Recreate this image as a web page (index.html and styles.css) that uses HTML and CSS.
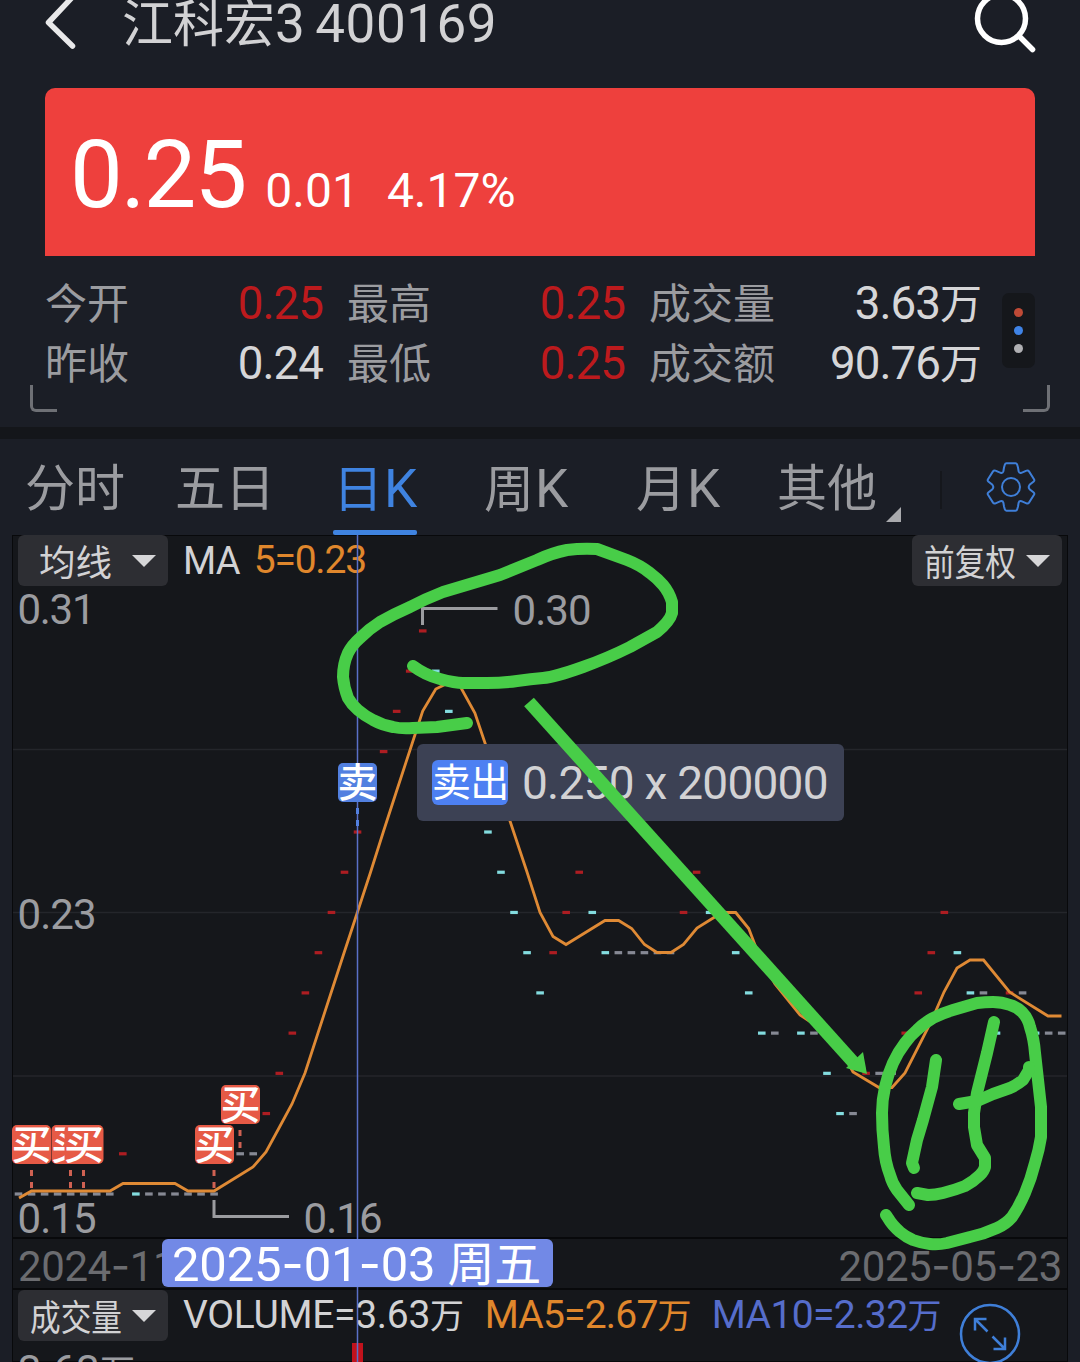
FILE: index.html
```html
<!DOCTYPE html>
<html lang="zh-CN">
<head>
  <meta charset="UTF-8" />
  <meta name="viewport" content="width=device-width, initial-scale=1.0"/>
  <title>江科宏3 400169</title>
  <link rel="stylesheet" href="styles.css">
</head>
<body>
  <header class="header">
    <svg class="back" width="40" height="60" viewBox="0 0 40 60">
      <path d="M34.5 -3L10.5 22.5L34.5 46"/>
    </svg>
    <h1>江科宏<span class="num">3</span><span class="num code">400169</span></h1>
    <svg class="search" width="70" height="60" viewBox="0 0 70 60">
      <circle cx="31.5" cy="18.5" r="24"/>
      <path d="M49 36L62.5 49.5"/>
    </svg>
  </header>

  <section class="quote">
    <div class="price">
      <span class="last">0.25</span>
      <span class="change">0.01</span>
      <span class="percent">4.17%</span>
    </div>
    <div class="stats">
      <div class="stat"><span>今开</span><b class="num up">0.25</b></div>
      <div class="stat"><span>最高</span><b class="num up">0.25</b></div>
      <div class="stat"><span>成交量</span><b><i class="num">3.63</i>万</b></div>
      <div class="stat"><span>昨收</span><b class="num">0.24</b></div>
      <div class="stat"><span>最低</span><b class="num up">0.25</b></div>
      <div class="stat"><span>成交额</span><b><i class="num">90.76</i>万</b></div>
    </div>
    <div class="dots"><i class="red"></i><i class="blue"></i><i></i></div>
    <div class="corner left"></div>
    <div class="corner right"></div>
  </section>

  <nav class="tabs">
    <a class="tab">分时</a>
    <a class="tab">五日</a>
    <a class="tab active">日<span class="num">K</span></a>
    <a class="tab">周<span class="num">K</span></a>
    <a class="tab">月<span class="num">K</span></a>
    <a class="tab more">其他</a>
    <span class="line"></span>
    <svg class="gear" width="50" height="50" viewBox="-25 -25 50 50">
      <path d="M-7 -19.5L-6.2 -22.3Q-5.8 -23.7 -4.5 -23.7H4.5Q5.8 -23.7 6.2 -22.3L7 -19.5L7.6 -15.8Q8.2 -13.6 10.4 -14.2L15.5 -16.3Q17 -17 18 -15.6L23 -7.8Q23.8 -6.4 22.7 -5.4L18.6 -2.2Q16.8 0 18.6 2.2L22.7 5.4Q23.8 6.4 23 7.8L18 15.6Q17 17 15.5 16.3L10.4 14.2Q8.2 13.6 7.6 15.8L7 19.5L6.2 22.3Q5.8 23.7 4.5 23.7H-4.5Q-5.8 23.7 -6.2 22.3L-7 19.5L-7.6 15.8Q-8.2 13.6 -10.4 14.2L-15.5 16.3Q-17 17 -18 15.6L-23 7.8Q-23.8 6.4 -22.7 5.4L-18.6 2.2Q-16.8 0 -18.6 -2.2L-22.7 -5.4Q-23.8 -6.4 -23 -7.8L-18 -15.6Q-17 -17 -15.5 -16.3L-10.4 -14.2Q-8.2 -13.6 -7.6 -15.8Z"/>
      <circle r="9"/>
    </svg>
  </nav>

  <main class="chart">
    <div class="row ma-row">
      <button class="pill">均线</button>
      <span class="ma">MA</span>
      <span class="ma5">5=0.23</span>
      <button class="pill narrow fq"><span>前复权</span></button>
    </div>
    <div class="plot"></div>
    <div class="row dates">
      <span>2024<i>-</i>11<i>-</i>25</span>
      <span>2025<i>-</i>05<i>-</i>23</span>
    </div>
    <div class="row vol-row">
      <button class="pill narrow"><span>成交量</span></button>
      <span class="vol">VOLUME=3.63<small>万</small></span>
      <span class="vol5">MA5=2.67<small>万</small></span>
      <span class="vol10">MA10=2.32<small>万</small></span>
    </div>
    <div class="vol-max">3.63<small>万</small></div>

    <!-- viewBox uses page coordinates, the chart starts at y=535 -->
    <svg class="layer" width="1080" height="827" viewBox="0 535 1080 827">
      <path class="grid" d="M13 749.5H1067M13 912.5H1067M13 1076H1067"/>
      <rect x="352" y="1343" width="11" height="19" fill="#c1121c"/>
      <g id="candles"></g>
      <polyline class="avg" points="19,1198 31.5,1191 110,1191 123,1183.5 175,1183.5 188,1191 214,1191 240,1175 253,1167 266,1152 279,1128 292,1104 305,1073 318,1033 331,993 344,953 357.5,912 370.6,872 383.6,831 396.6,791 409.7,751 422.7,711 435.8,689 446,684 460,686 474.9,713 485,743 501,790 510,821 527,872 540,912.5 553,936.5 566,944.5 605,920.5 618.6,920.5 631.7,928.5 644.5,944.5 657,952.5 671,952.5 683.5,944.5 697,928 722,912.5 735.7,912.5 748.7,928.5 760,958 775,984 800,1015 813.8,1024 840,1048 853,1072 879,1087.5 892,1087.5 905,1073 931,1022 944,992 957,968 970,960 983.5,960 1009.5,992 1048,1016 1061.5,1016"/>
      <path class="hint" d="M422.5 625V608.5H497.5M214 1200V1216.5H289"/>
      <g class="axis">
        <text x="17.5" y="624" textLength="78">0.31</text>
        <text x="17.5" y="929" textLength="79">0.23</text>
        <text x="17.5" y="1233" textLength="79">0.15</text>
        <text x="303.5" y="1233" textLength="79">0.16</text>
        <text x="512.5" y="625" textLength="79">0.30</text>
      </g>
      <path class="cross" d="M357.5 535V1362"/>
      <path class="stem sell" d="M357.5 808V814M357.5 820V826"/>
      <path class="stem" d="M31.5 1170V1176M31.5 1182V1188M70.5 1170V1176M70.5 1182V1188M83.5 1170V1176M83.5 1182V1188M214 1170V1176M214 1182V1188M240 1130V1136M240 1142V1148"/>
      <g class="trade">
        <rect x="12" y="1125" width="39" height="39" rx="5"/><text x="31.5" y="1158.5">买</text>
        <rect x="51.5" y="1125" width="39" height="39" rx="5"/><text x="71" y="1158.5">买</text>
        <rect x="64.5" y="1125" width="39" height="39" rx="5"/><text x="84" y="1158.5">买</text>
        <rect x="195" y="1125" width="39" height="39" rx="5"/><text x="214.5" y="1158.5">买</text>
        <rect x="221" y="1085" width="39" height="39" rx="5"/><text x="240.5" y="1118.5">买</text>
        <rect class="sell" x="338" y="763" width="39" height="39" rx="5"/><text x="357.5" y="797">卖</text>
      </g>
    </svg>

    <div class="date-tag">2025<i>-</i>01<i>-</i>03 <small>周五</small></div>
    <div class="tooltip"><b>卖出</b><span>0.250 x 200000</span></div>

    <svg class="expand" width="62" height="62" viewBox="-31 -31 62 62">
      <circle r="29"/>
      <path d="M-2.5 -2.5L-15 -15M-15 -3.5V-15H-3.5M2.5 2.5L15 15M15 3.5V15H3.5"/>
    </svg>

    <!-- hand drawn notes -->
    <svg class="layer notes" width="1080" height="827" viewBox="0 535 1080 827">
      <path d="M413 666Q425 675 440 679T463 683T487 683T517 681T543 678T583 667Q608 658 630 647L657 632Q670 621 672 613V602Q669 592 663 585Q658 579 650 573Q640 565 627 560L597 549Q582 548 567 550Q552 553 537 560L500 575L443 592Q425 599 410 607Q394 614 380 622Q369 629 360 638Q352 645 348 653Q343 664 343 677Q344 688 348 698Q352 705 358 710Q365 716 373 720Q382 725 393 727Q402 729 413 728L437 727L467 723"/>
      <path d="M909 1205L897 1190Q892 1183 890 1175Q885 1162 884 1147Q882 1130 882 1113Q882 1100 885 1087Q888 1074 893 1063Q898 1052 905 1043Q911 1035 917 1030Q924 1023 933 1018Q943 1013 953 1010L977 1003Q985 1002 993 1002Q1002 1002 1010 1005Q1017 1007 1022 1012Q1028 1018 1030 1027Q1034 1039 1035 1053L1038 1080L1041 1107V1137Q1039 1150 1035 1163Q1031 1179 1025 1193Q1019 1207 1012 1217Q1006 1224 997 1228Q984 1234 970 1237L947 1243Q938 1245 930 1244Q921 1243 913 1240Q906 1237 900 1232Q892 1225 888 1218L886 1215"/>
      <path d="M936 1060L932 1087L923 1120L917 1140L912 1163L914 1168"/>
      <path d="M994 1022L987 1053L977 1093L974 1113V1127L977 1145L985 1158V1167Q984 1171 980 1175Q974 1181 965 1186Q955 1190 943 1193Q935 1195 928 1195L917 1193"/>
      <path d="M959 1104L977 1101L993 1094L1010 1088Q1017 1085 1023 1080L1029 1070V1067"/>
      <path class="arrow" d="M529 702L854 1063"/>
      <polygon points="867,1074 846,1068 863,1052"/>
    </svg>
  </main>

  <script>
    // colour + close in cents for every trading day, "-" = nothing to draw
    const days = 'g16 g16 g16 g16 g16 g16 g16 g16 r17 c16 g16 g16 g16 g16 g16 g16 r17 g17 g17 r18 r19 r20 r21 r22 r23 r24 r25 r26 r27 r28 r29 r30 c29 c28 c27 c26 c25 c24 c23 c22 c21 r22 r23 r24 c23 c22 g22 g22 g22 g22 g22 r23 r24 c23 g23 c22 c21 c20 g20 - c20 g20 c19 c18 g18 r19 g19 g19 r20 r21 r22 r23 c22 c21 g21 c20 r21 g21 c20 g20 g20'.split(' ');
    const colors = { g: '#868994', r: '#ad1d22', c: '#83dcdf' };
    const candles = document.getElementById('candles');

    days.forEach((day, i) => {
      if (day === '-') return;
      const bar = document.createElementNS('http://www.w3.org/2000/svg', 'rect');
      bar.setAttribute('x', 18.5 + i * 13.04 - 3.8);
      bar.setAttribute('y', 1194 - (day.slice(1) - 16) * 40.22 - 1.6);
      bar.setAttribute('width', 7.6);
      bar.setAttribute('height', 3.2);
      bar.setAttribute('fill', colors[day[0]]);
      candles.appendChild(bar);
    });
  </script>
</body>
</html>
```
FILE: styles.css
```css
* {
  box-sizing: border-box;
}

body {
  margin: 0;
  width: 1080px;
  height: 1362px;
  overflow: hidden;
  background: #1b1e26;
  color: #d2d2d4;
  font-family: Roboto, "Noto Sans CJK SC", sans-serif;
}

i, b, small {
  font-style: normal;
  font-weight: normal;
}

.num {
  font-size: 1.09em;
}

/* header */
.header {
  height: 88px;
  display: flex;
  align-items: flex-start;
  padding: 0 40px 0 38px;
}

.header svg {
  fill: none;
  stroke: #fff;
  stroke-width: 5.5;
  stroke-linecap: round;
}

.header .back {
  stroke: #e9e9ea;
  stroke-linejoin: round;
}

.search {
  margin-left: auto;
}

h1 {
  margin: 0 0 0 44px;
  font-size: 51px;
  font-weight: normal;
  line-height: 48px;
}

h1 .num {
  font-size: 53px;
  letter-spacing: 0.5px;
}

.code {
  margin-left: 10px;
}

/* quote */
.quote {
  position: relative;
  height: 351px;
  padding: 0 45px;
  border-bottom: 12px solid #14161a;
}

.price {
  height: 168px;
  background: #ee403d;
  border-radius: 10px 10px 0 0;
  color: #fff;
  padding: 32px 0 0 25px;
  display: flex;
  align-items: baseline;
}

.last {
  font-size: 94px;
  letter-spacing: -2px;
}

.change, .percent {
  font-size: 48px;
}

.change {
  margin-left: 20px;
}

.percent {
  margin-left: 28px;
}

.stats {
  display: grid;
  grid-template-columns: 278px 278px 333px;
  grid-auto-rows: 60px;
  column-gap: 24px;
  padding-top: 18px;
  font-size: 42px;
}

.stat {
  display: flex;
  justify-content: space-between;
  align-items: baseline;
  line-height: 60px;
  color: #d6d6d8;
}

.stat span {
  color: #9b9ca0;
}

.stat .num {
  letter-spacing: -1px;
}

.stat .up {
  color: #bd1a1d;
}

.dots {
  position: absolute;
  left: 1002px;
  top: 205px;
  width: 33px;
  height: 75px;
  border-radius: 7px;
  background: #15171b;
  display: flex;
  flex-direction: column;
  align-items: center;
  justify-content: center;
  gap: 9px;
}

.dots i {
  width: 9px;
  height: 9px;
  border-radius: 50%;
  background: #b0b0b3;
}

.dots .red {
  background: #bf4a36;
}

.dots .blue {
  background: #3f83e6;
}

.corner {
  position: absolute;
  top: 297px;
  width: 27px;
  height: 27px;
  border: 3px solid #6e7075;
  border-top: 0;
}

.corner.left {
  left: 30px;
  border-right: 0;
  border-radius: 0 0 0 6px;
}

.corner.right {
  right: 30px;
  border-left: 0;
  border-radius: 0 0 6px 0;
}

/* tabs */
.tabs {
  height: 96px;
  display: flex;
  padding-left: 25px;
  font-size: 50px;
  line-height: 101px;
  color: #9b9ca0;
}

.tab {
  position: relative;
  width: 100px;
  height: 96px;
  margin-right: 50px;
  white-space: nowrap;
}

.tab .num {
  font-size: 53px;
  margin-left: 1px;
}

.tab.active {
  width: 84px;
  margin: 0 67px 0 8px;
  color: #3f83e0;
}

.tab.active::after {
  content: "";
  position: absolute;
  left: 0;
  bottom: 0;
  width: 84px;
  height: 5px;
  border-radius: 2px;
  background: #3f83e0;
}

.tab:nth-child(4) {
  margin-right: 52px;
}

.tab:nth-child(5) {
  margin-right: 41px;
}

.tab.more {
  margin-right: 63px;
}

.more::after {
  content: "";
  position: absolute;
  right: -24px;
  bottom: 13px;
  border-left: 15px solid transparent;
  border-bottom: 15px solid #a9aaad;
}

.line {
  width: 2px;
  height: 38px;
  margin-top: 32px;
  background: #15171c;
}

.gear {
  margin: 23px 0 0 44px;
  fill: none;
  stroke: #3f7fd8;
  stroke-width: 2;
}

/* chart */
.chart {
  position: relative;
  height: 827px;
}

.chart::before {
  content: "";
  position: absolute;
  z-index: -1;
  inset: 0 12px;
  background: #15171b;
  border: 1px solid #08090b;
}

.row {
  height: 51px;
  padding: 0 18px;
  display: flex;
  white-space: nowrap;
  font-size: 38px;
  line-height: 51px;
}

.pill {
  width: 150px;
  height: 51px;
  padding: 0 12px 0 21px;
  border: 0;
  border-radius: 6px;
  background: #2d2e33;
  color: #d2d2d4;
  font: 36.5px/50px "Noto Sans CJK SC", sans-serif;
  display: flex;
  align-items: center;
  justify-content: space-between;
}

.pill::after {
  content: "";
  border: 12px solid transparent;
  border-top-color: #d6d6d8;
  border-bottom: 0;
}

.pill.narrow {
  padding-left: 12px;
}

.narrow span {
  width: 92px;
  transform: scaleX(0.84);
  transform-origin: 0 50%;
}

.ma {
  margin-left: 15px;
  padding-top: 1px;
  letter-spacing: -0.8px;
}

.ma5 {
  margin-left: 14px;
  color: #e0872c;
  letter-spacing: -1.2px;
  font-size: 39px;
}

.fq {
  margin-left: auto;
}

.plot {
  height: 653px;
  margin: 0 12px;
  border-bottom: 2px solid #08090b;
}

.dates {
  justify-content: space-between;
  font-size: 42px;
  line-height: 54px;
  color: #6b6c70;
  margin: 0 12px;
  padding: 0 6px;
  border-bottom: 2px solid #08090b;
}

.dates i, .date-tag i {
  font-family: Inter, sans-serif;
}

.dates span {
  letter-spacing: -0.4px;
}

.vol-row {
  font-size: 39px;
}

.vol {
  margin-left: 15px;
  letter-spacing: -0.3px;
}

.vol5 {
  margin-left: 21px;
  color: #e0872c;
  letter-spacing: -0.8px;
}

.vol10 {
  margin-left: 21px;
  color: #566dcb;
  letter-spacing: -0.6px;
}

.row small {
  font-size: 34px;
}

.vol-max {
  padding-left: 18px;
  font-size: 42px;
  line-height: 60px;
  color: #9b9ca0;
}

.layer {
  position: absolute;
  left: 0;
  top: 0;
}

.layer path, .layer polyline {
  fill: none;
}

.layer .grid {
  stroke: #24262b;
  stroke-width: 1.5;
}

.avg {
  stroke: #df8a35;
  stroke-width: 2.8;
}

.hint {
  stroke: #9b9ca0;
  stroke-width: 3;
}

.axis {
  font-size: 42px;
  fill: #9b9ca0;
}

.cross {
  stroke: #5a70c8;
  stroke-width: 1.5;
}

.stem {
  stroke: #cf6152;
  stroke-width: 3;
}

.stem.sell {
  stroke: #5280e0;
}

.trade rect {
  fill: #e65a46;
}

.trade .sell {
  fill: #5280e0;
}

.trade text {
  fill: #fff;
  font: 500 40px "Noto Sans CJK SC", sans-serif;
  text-anchor: middle;
}

.date-tag {
  position: absolute;
  left: 162px;
  top: 704px;
  width: 391px;
  height: 48px;
  padding-left: 10px;
  border-radius: 6px;
  background: #7289e6;
  color: #fff;
  font-size: 49px;
  line-height: 49px;
  letter-spacing: -0.2px;
  white-space: nowrap;
}

.date-tag small {
  font-size: 47px;
}

.tooltip {
  position: absolute;
  left: 417px;
  top: 209px;
  width: 427px;
  height: 77px;
  padding-left: 15px;
  border-radius: 6px;
  background: #3c4154;
  display: flex;
  align-items: center;
  font-size: 46px;
  letter-spacing: -0.75px;
  white-space: nowrap;
}

.tooltip b {
  width: 76px;
  height: 45px;
  margin-right: 14px;
  border-radius: 6px;
  background: #4d80f2;
  color: #fff;
  font-size: 39px;
  line-height: 47px;
}

.expand {
  position: absolute;
  left: 959px;
  top: 768px;
  fill: none;
  stroke: #3f7fd8;
  stroke-width: 2.5;
}

.layer.notes path {
  stroke: #48cd48;
  stroke-width: 12;
  stroke-linecap: round;
  stroke-linejoin: round;
}

.layer.notes .arrow {
  stroke-width: 13;
  stroke-linecap: butt;
}

.notes polygon {
  fill: #48cd48;
}
```
